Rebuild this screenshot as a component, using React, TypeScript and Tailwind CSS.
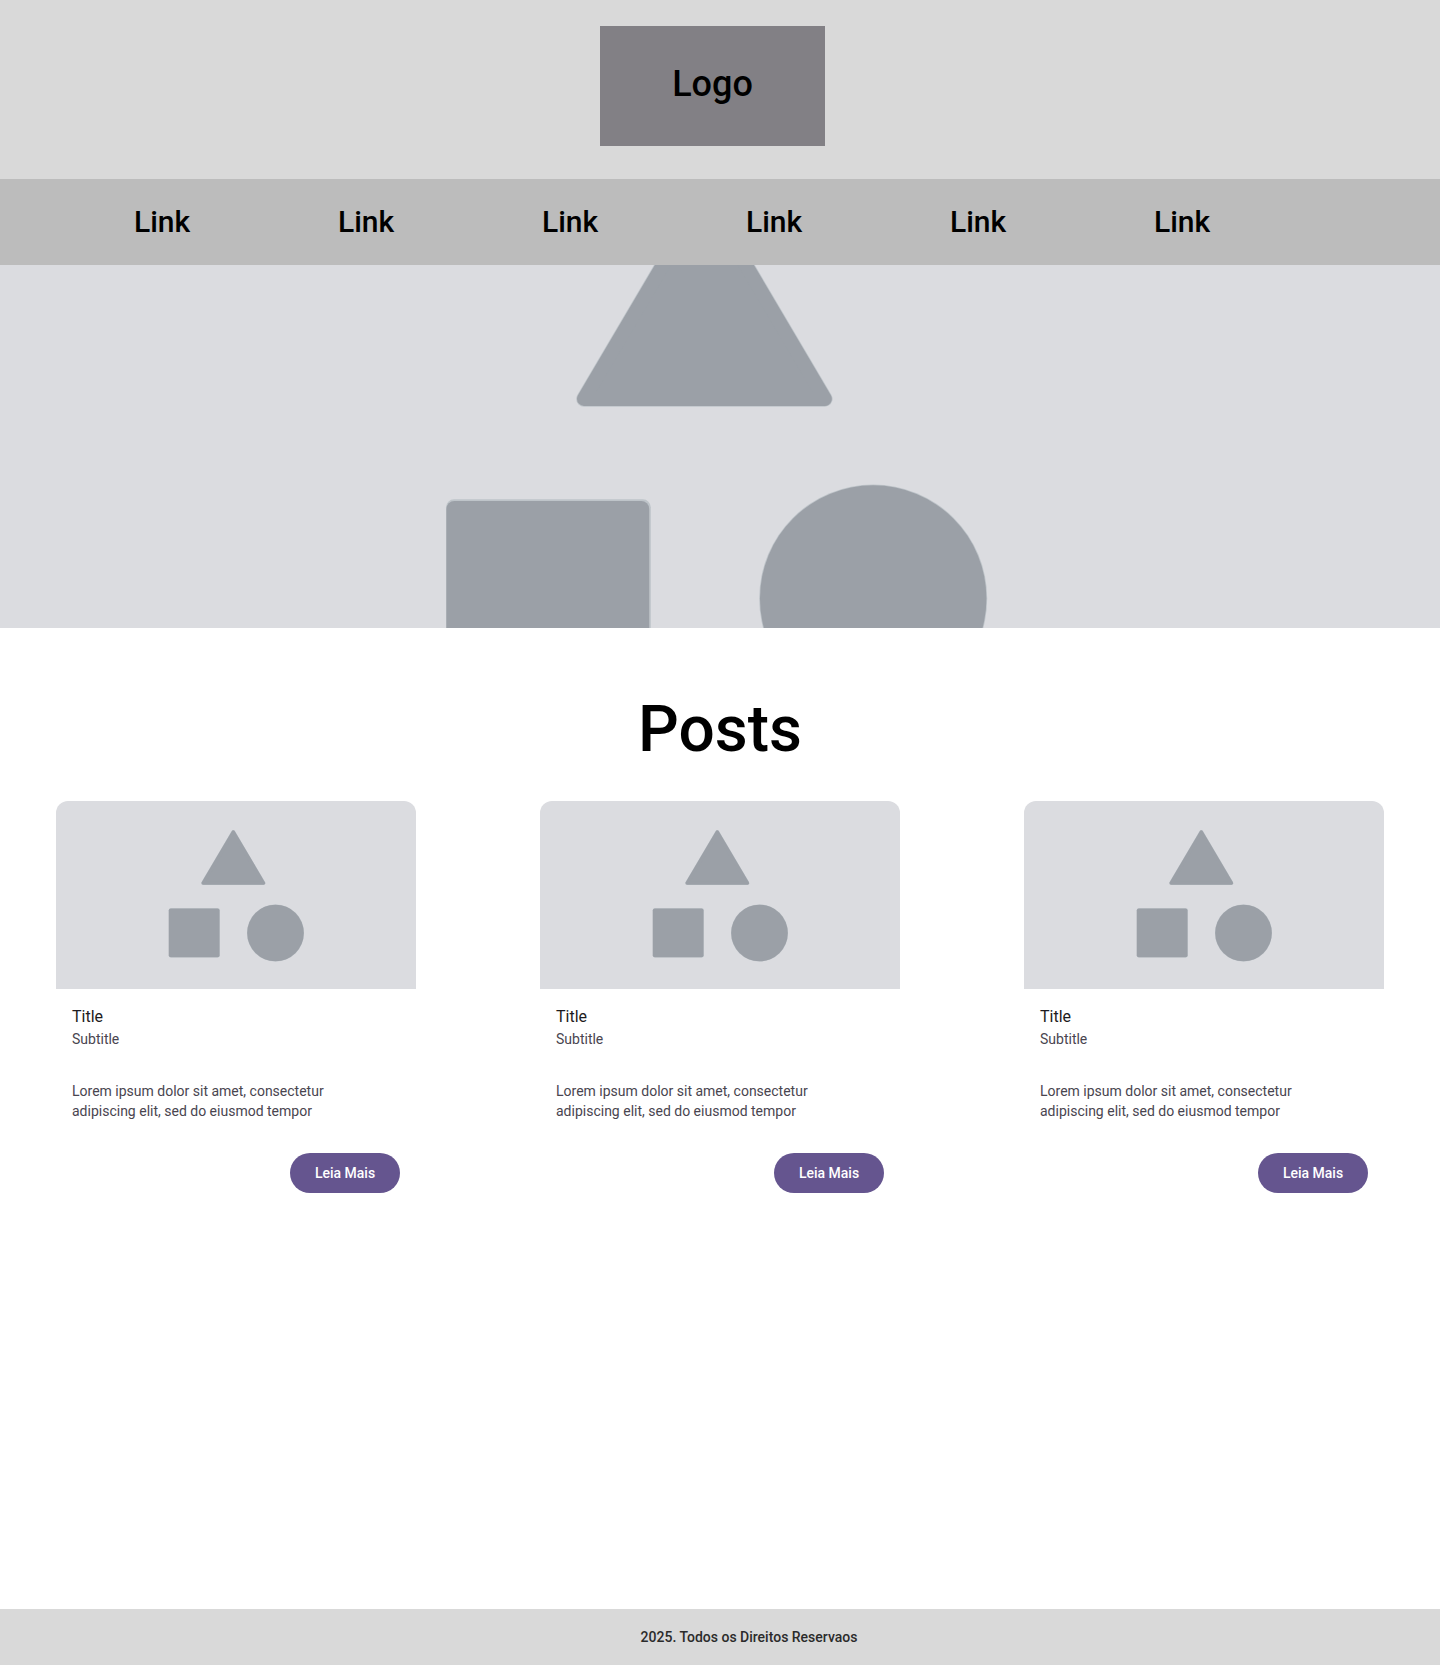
const links = ["Link", "Link", "Link", "Link", "Link", "Link"];

const posts = [1, 2, 3].map((id) => ({
  id,
  title: "Title",
  subtitle: "Subtitle",
  text: "Lorem ipsum dolor sit amet, consectetur adipiscing elit, sed do eiusmod tempor",
}));

function Placeholder({ viewBox, className }: { viewBox: string; className: string }) {
  return (
    <svg
      viewBox={viewBox}
      preserveAspectRatio="xMidYMid slice"
      className={className}
      aria-hidden="true"
      fill="#9ba0a7"
    >
      <path
        d="M177.3 31.1 207.4 82.1H147.2Z"
        stroke="#bec4c9"
        strokeWidth="3.9"
        strokeLinejoin="round"
      />
      <path
        d="M177.3 31.1 207.4 82.1H147.2Z"
        stroke="#9ba0a7"
        strokeWidth="3.5"
        strokeLinejoin="round"
      />
      <rect x="112.7" y="107.2" width="51.2" height="49.2" rx="2" fill="#bec4c9" />
      <rect x="112.8" y="107.6" width="50.7" height="48.6" rx="2" />
      <circle cx="219.5" cy="132" r="28.5" fill="#bec4c9" />
      <circle cx="219.5" cy="132" r="28.3" />
    </svg>
  );
}

function PostCard({ title, subtitle, text }: { title: string; subtitle: string; text: string }) {
  return (
    <article className="w-[360px] overflow-hidden rounded-xl bg-white">
      <Placeholder viewBox="0 0 360 188" className="block h-[188px] w-full bg-[#dbdce0]" />
      <div className="flex flex-col gap-8 p-4">
        <div>
          <h2 className="text-base leading-6 text-[#1d1b20]">{title}</h2>
          <p className="text-sm leading-5 text-[#49454f]">{subtitle}</p>
        </div>
        <p className="max-w-[270px] text-sm leading-5 text-[#49454f]">{text}</p>
        <button
          type="button"
          className="h-10 w-[110px] self-end rounded-full bg-[#65558f] text-sm font-medium text-white"
        >
          Leia Mais
        </button>
      </div>
    </article>
  );
}

export default function App() {
  return (
    <div className="flex min-h-screen flex-col bg-white font-['Roboto',sans-serif] text-black">
      <header className="flex justify-center bg-[#d9d9d9] pt-[26px] pr-[15px] pb-[33px]">
        <a
          href="#"
          className="flex h-[120px] w-[225px] items-center justify-center bg-[#828085] pb-1 text-4xl font-medium"
        >
          Logo
        </a>
      </header>
      <nav className="grid h-[86px] grid-cols-6 items-center bg-[#bcbcbc] pr-[82px] pl-[134px]">
        {links.map((label, i) => (
          <a key={i} href="#" className="text-3xl font-medium">
            {label}
          </a>
        ))}
      </nav>
      <Placeholder viewBox="1.2 0 360 188" className="block h-[363px] w-full bg-[#dbdce0]" />
      <main className="px-14 pt-16 pb-14">
        <h1 className="text-center text-[64px] leading-[76px] font-medium">Posts</h1>
        <div className="mt-[33px] flex flex-wrap justify-between gap-y-8">
          {posts.map((post) => (
            <PostCard key={post.id} title={post.title} subtitle={post.subtitle} text={post.text} />
          ))}
        </div>
      </main>
      <footer className="mt-auto flex h-14 items-center justify-center bg-[#d9d9d9] pl-[58px] text-sm font-medium text-[#2b2b2b]">
        2025. Todos os Direitos Reservaos
      </footer>
    </div>
  );
}
